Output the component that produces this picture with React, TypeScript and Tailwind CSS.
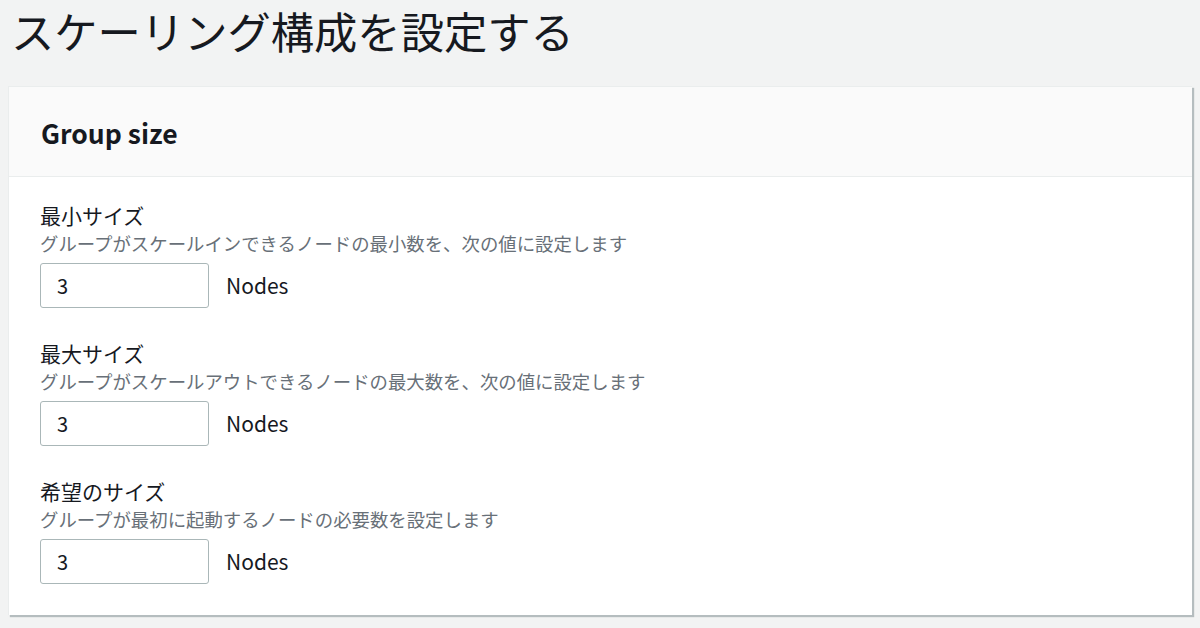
const FONT = "font-['Noto_Sans_CJK_JP','Noto_Sans',sans-serif]"

const FIELDS = [
  { label: '最小サイズ', desc: 'グループがスケールインできるノードの最小数を、次の値に設定します', value: '3' },
  { label: '最大サイズ', desc: 'グループがスケールアウトできるノードの最大数を、次の値に設定します', value: '3' },
  { label: '希望のサイズ', desc: 'グループが最初に起動するノードの必要数を設定します', value: '3' },
]

function SizeField({ label, desc, value }: { label: string; desc: string; value: string }) {
  return (
    <div className="flex flex-col">
      <div className="text-[21px] leading-[28px] text-[#16191f]">{label}</div>
      <div className="mt-px text-[18.4px] leading-[26px] text-[#687078]">{desc}</div>
      <div className="mt-[7px] flex items-center gap-[17px]">
        <input
          readOnly
          value={value}
          className="h-[45px] w-[169px] rounded-[3px] border border-[#aab7b8] bg-white px-[16px] text-[20px] text-[#16191f] outline-none"
        />
        <span className="text-[21px] text-[#16191f]">Nodes</span>
      </div>
    </div>
  )
}

export default function App() {
  return (
    <div className={`${FONT} min-h-screen w-[1200px] bg-[#f2f3f3] pt-[5px]`}>
      <h1 className="pl-[11px] text-[43.3px] leading-[50px] font-normal text-[#16191f]">スケーリング構成を設定する</h1>

      <section className="mx-[8px] mt-[31px] border-t border-l border-[#eaeded] bg-white shadow-[2px_2px_1px_0_rgba(0,28,36,0.25)]">
        <header className="flex h-[90px] items-center border-b border-[#eaeded] bg-[#fafafa] px-[32px] pt-[2px]">
          <h2 className="text-[26.5px] font-bold text-[#16191f]">Group size</h2>
        </header>
        <div className="flex flex-col gap-[31px] px-[31px] pt-[24px] pb-[31px]">
          {FIELDS.map((f) => (
            <SizeField key={f.label} {...f} />
          ))}
        </div>
      </section>
    </div>
  )
}
